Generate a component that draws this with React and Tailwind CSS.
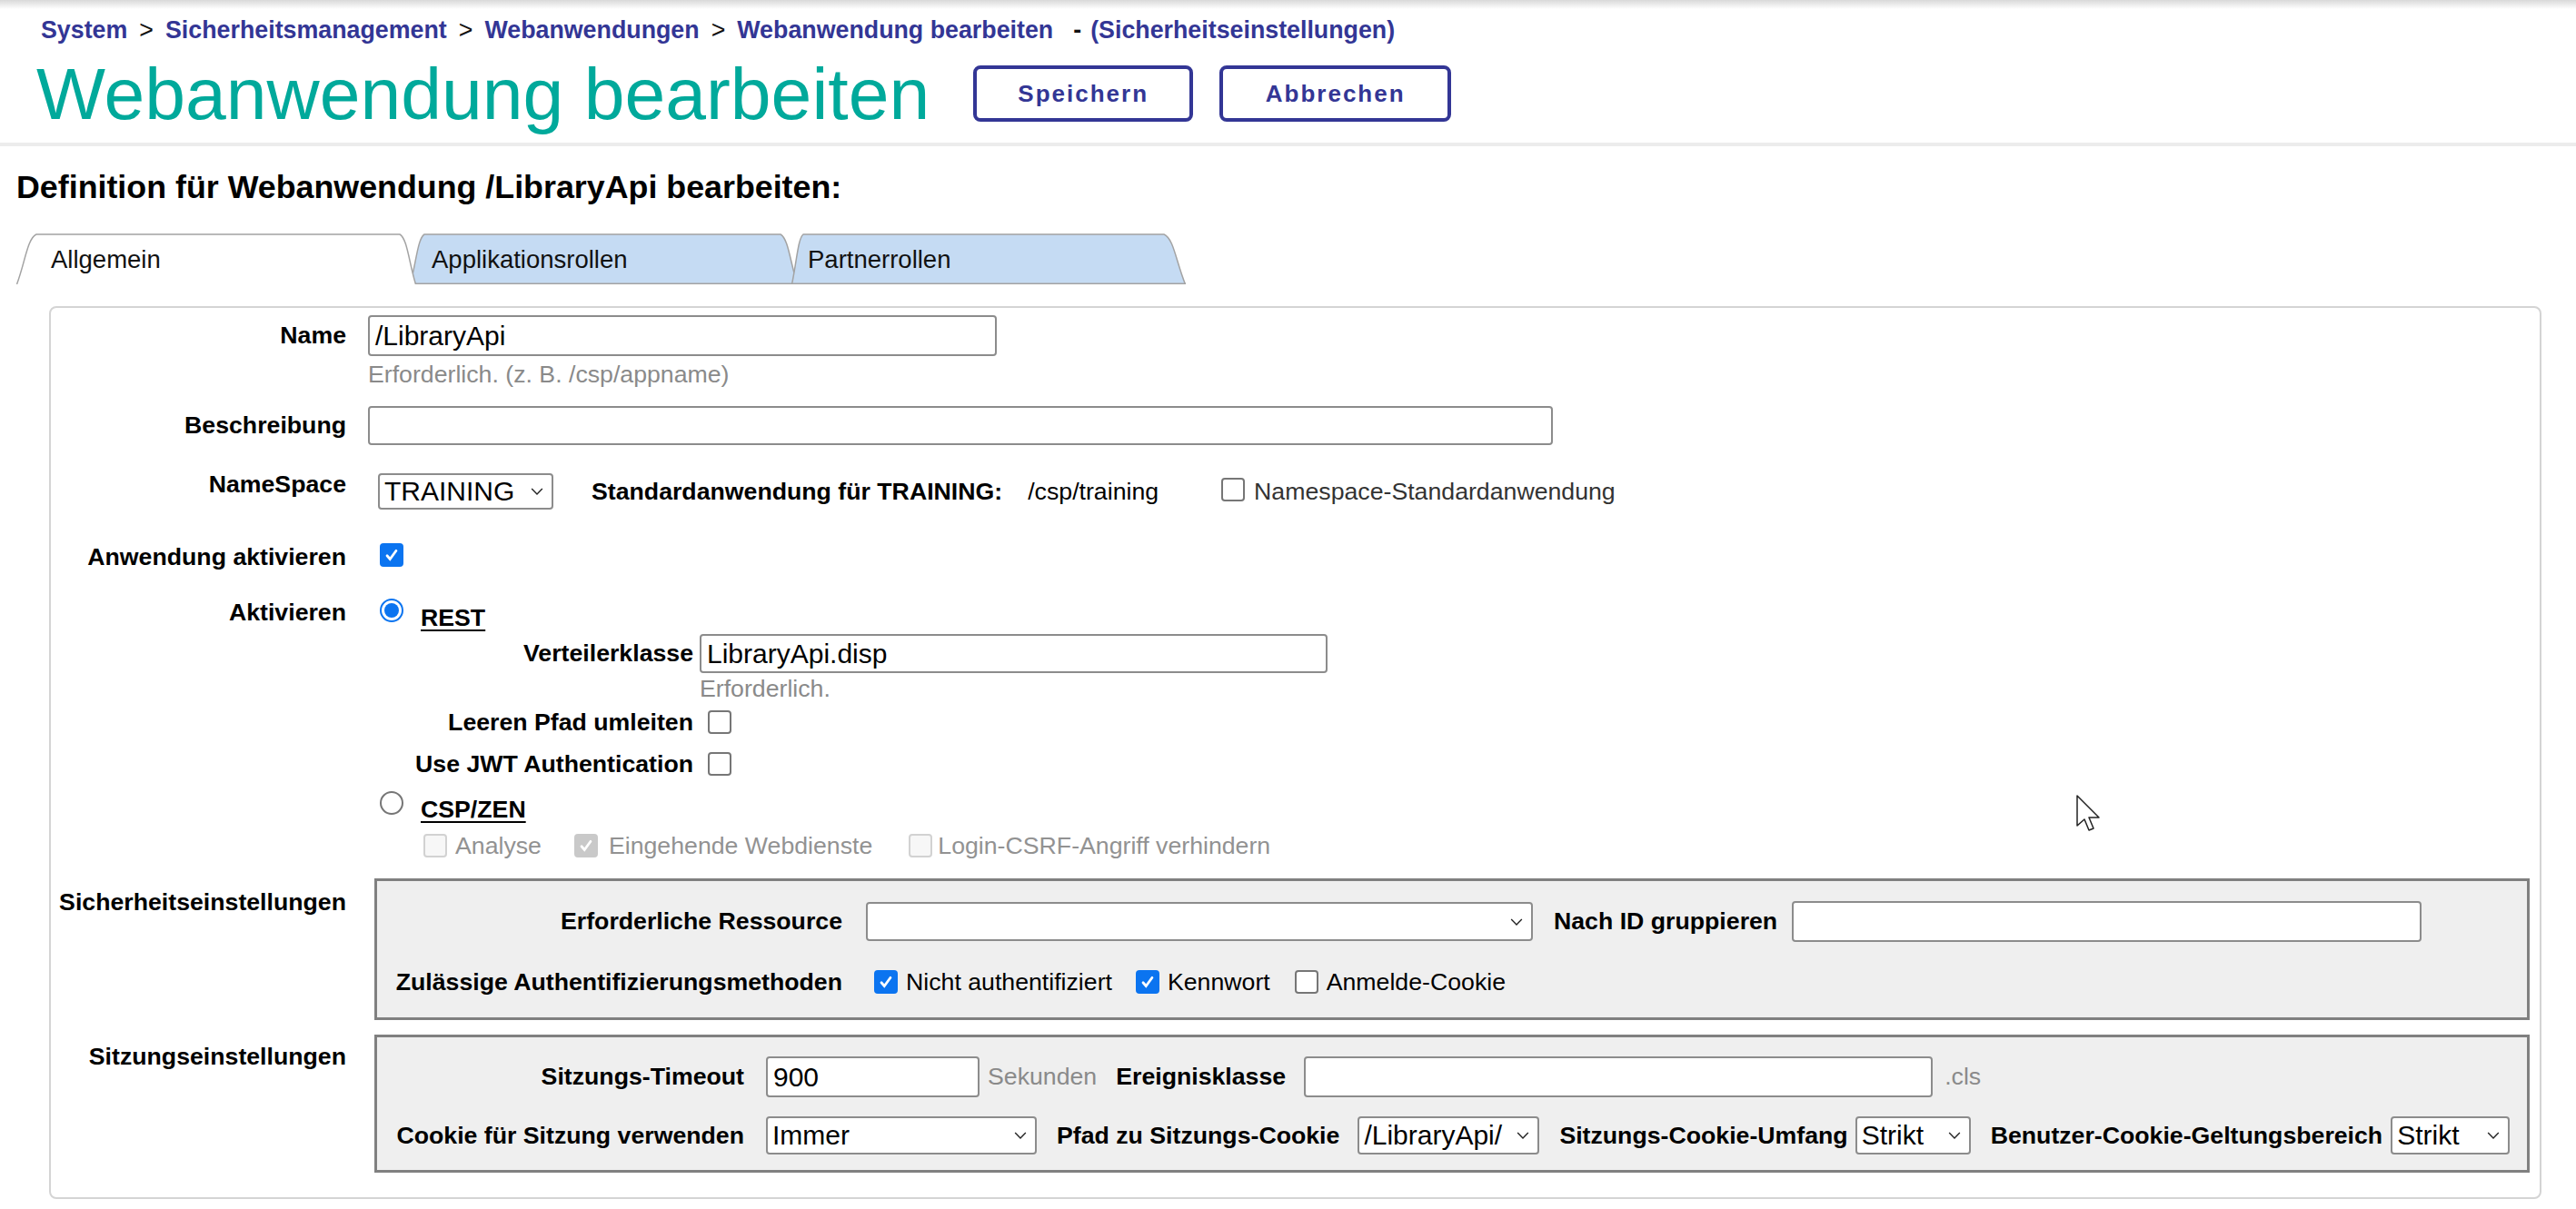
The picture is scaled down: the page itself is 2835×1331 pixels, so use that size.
import React from 'react';

const BLUE = 'text-[#333695]';

function Check({ checked, disabled, className = '' }) {
  if (checked) {
    return (
      <span
        className={`inline-flex h-[26px] w-[26px] shrink-0 items-center justify-center rounded-[4px] ${
          disabled ? 'bg-[#c9c9c9]' : 'bg-[#0b74f0]'
        } ${className}`}
      >
        <svg viewBox="0 0 16 16" className="h-[20px] w-[20px]">
          <path d="M4 8.6 L6.6 11.6 L12 4.2" fill="none" stroke="white" strokeWidth="2.2" strokeLinecap="round" />
        </svg>
      </span>
    );
  }
  return (
    <span
      className={`inline-block h-[26px] w-[26px] shrink-0 rounded-[4px] border-2 ${
        disabled ? 'border-[#d2d2d2] bg-[#f7f7f7]' : 'border-[#767676] bg-white'
      } ${className}`}
    />
  );
}

function Radio({ checked, className = '' }) {
  if (checked) {
    return (
      <span className={`flex h-[26px] w-[26px] shrink-0 items-center justify-center rounded-full border-[2px] border-[#0b74f0] bg-white ${className}`}>
        <span className="h-[16px] w-[16px] rounded-full bg-[#0b74f0]" />
      </span>
    );
  }
  return <span className={`block h-[26px] w-[26px] shrink-0 rounded-full border-2 border-[#767676] bg-white ${className}`} />;
}

function Input({ value = '', className = '' }) {
  return (
    <div className={`flex items-center rounded-[4px] border-2 border-[#8c8c8c] bg-white pl-[6px] text-[30px] leading-none text-black ${className}`}>
      {value}
    </div>
  );
}

function Select({ value = '', className = '' }) {
  return (
    <div className={`flex items-center justify-between rounded-[4px] border-2 border-[#8c8c8c] bg-white pl-[5px] pr-[9px] text-[30px] leading-none text-black ${className}`}>
      <span className="whitespace-nowrap">{value}</span>
      <svg viewBox="0 0 12 8" className="h-[10px] w-[14px] shrink-0">
        <path d="M1 1.5 L6 6.5 L11 1.5" fill="none" stroke="#222" strokeWidth="1.2" />
      </svg>
    </div>
  );
}

// label cell: right aligned, never wraps, overflows to the left if too long
function Label({ children, className = '' }) {
  return <div className={`flex shrink-0 justify-end whitespace-nowrap font-bold ${className}`}>{children}</div>;
}

function Tab({ label, active, width, left, right, textPad, className = '' }) {
  const h = 56;
  const fill = active ? '#ffffff' : '#c5dbf3';
  const d = `M0.5 ${h} C ${left * 0.45} ${h * 0.55}, ${left * 0.55} ${h * 0.1}, ${left} 1 L ${width - right} 1 C ${width - right * 0.55} ${h * 0.1}, ${width - right * 0.45} ${h * 0.55}, ${width - 0.5} ${h}`;
  return (
    <div className={`relative h-[56px] shrink-0 ${className}`} style={{ width }}>
      <svg className="absolute inset-0" width={width} height={h}>
        <path d={`${d} Z`} fill={fill} stroke="none" />
        <path d={d} fill="none" stroke="#a3a3a3" strokeWidth="1.5" />
        {!active && <line x1="0" y1={h - 0.75} x2={width} y2={h - 0.75} stroke="#a3a3a3" strokeWidth="1.5" />}
      </svg>
      <span className="relative block pt-[14px] text-[27.5px] leading-[30px] text-[#111]" style={{ paddingLeft: textPad }}>
        {label}
      </span>
    </div>
  );
}

export default function App() {
  return (
    <div className="relative min-h-[1331px] w-[2835px] bg-white font-['Liberation_Sans',Arial,sans-serif] text-[26.7px] text-black">
      {/* header */}
      <div className="border-b-[4px] border-[#ececec] pb-[14px]">
        <div className="h-[10px] bg-gradient-to-b from-[#d9d9d9] to-white" />
        <div className={`ml-[45px] mt-[8px] flex items-center gap-[13px] text-[26.8px] font-bold leading-[30px] ${BLUE}`}>
          <span>System</span>
          <span className="font-normal text-[#111]">&gt;</span>
          <span>Sicherheitsmanagement</span>
          <span className="font-normal text-[#111]">&gt;</span>
          <span>Webanwendungen</span>
          <span className="font-normal text-[#111]">&gt;</span>
          <span>Webanwendung bearbeiten</span>
          <span className="ml-[9px] text-[#111]">-</span>
          <span className="-ml-[3px]">(Sicherheitseinstellungen)</span>
        </div>
        <div className="ml-[40px] mt-[15px] flex items-center">
          <h1 className="text-[80.5px] leading-[80px] text-[#00a99b]">Webanwendung bearbeiten</h1>
          <button className={`ml-[48px] h-[62px] w-[242px] rounded-[8px] border-[4px] border-[#333695] text-[26px] font-bold tracking-[2px] ${BLUE}`}>
            Speichern
          </button>
          <button className={`ml-[29px] h-[62px] w-[255px] rounded-[8px] border-[4px] border-[#333695] text-[26px] font-bold tracking-[2px] ${BLUE}`}>
            Abbrechen
          </button>
        </div>
      </div>

      <h2 className="ml-[18px] mt-[25px] text-[35.8px] font-bold leading-[40px]">Definition für Webanwendung /LibraryApi bearbeiten:</h2>

      {/* tabs */}
      <div className="ml-[18px] mt-[31px] flex">
        <Tab label="Allgemein" active width={440} left={22} right={18} textPad={38} className="z-10" />
        <Tab label="Applikationsrollen" width={427} left={16} right={19} textPad={24} className="-ml-[7px]" />
        <Tab label="Partnerrollen" width={434} left={13} right={24} textPad={18} className="-ml-[7px]" />
      </div>

      {/* main panel */}
      <div className="ml-[54px] mt-[24px] w-[2743px] rounded-[8px] border-2 border-[#d4d4d4] pb-[27px] pt-[8px]">
        {/* Name */}
        <div className="flex">
          <Label className="w-[325px] leading-[45px]">Name</Label>
          <div className="ml-[24px]">
            <Input value="/LibraryApi" className="h-[45px] w-[692px]" />
            <div className="mt-[5px] leading-[30px] text-[#8a8a8a]">Erforderlich. (z. B. /csp/appname)</div>
          </div>
        </div>

        {/* Beschreibung */}
        <div className="mt-[20px] flex">
          <Label className="w-[325px] leading-[43px]">Beschreibung</Label>
          <Input className="ml-[24px] h-[43px] w-[1304px]" />
        </div>

        {/* NameSpace */}
        <div className="mt-[28px] flex items-start">
          <Label className="w-[325px] leading-[30px]">NameSpace</Label>
          <div className="ml-[24px] mt-[3px] flex h-[40px] items-center whitespace-nowrap">
            <Select value="TRAINING" className="ml-[11px] h-[40px] w-[193px]" />
            <span className="ml-[42px] font-bold">Standardanwendung für TRAINING:</span>
            <span className="ml-[28px]">/csp/training</span>
            <Check className="-mt-[4px] ml-[69px]" />
            <span className="ml-[10px] text-[#333]">Namespace-Standardanwendung</span>
          </div>
        </div>

        {/* Anwendung aktivieren */}
        <div className="mt-[37px] flex items-start">
          <Label className="w-[325px] leading-[30px]">Anwendung aktivieren</Label>
          <Check checked className="ml-[37px]" />
        </div>

        {/* Aktivieren */}
        <div className="mt-[31px] flex items-start">
          <Label className="w-[325px] leading-[30px]">Aktivieren</Label>
          <div className="ml-[24px]">
            <div className="flex items-start">
              <Radio checked className="ml-[13px]" />
              <span className="ml-[19px] mt-[6px] font-bold leading-[30px] underline underline-offset-[4px]">REST</span>
            </div>
            <div className="mt-[3px] flex">
              <Label className="w-[358px] leading-[43px]">Verteilerklasse</Label>
              <Input value="LibraryApi.disp" className="ml-[7px] h-[43px] w-[691px]" />
            </div>
            <div className="ml-[365px] mt-[2px] leading-[30px] text-[#8a8a8a]">Erforderlich.</div>
            <div className="mt-[7px] flex items-center">
              <Label className="w-[358px] leading-[30px]">Leeren Pfad umleiten</Label>
              <Check className="ml-[16px]" />
            </div>
            <div className="mt-[16px] flex items-center">
              <Label className="w-[358px] leading-[30px]">Use JWT Authentication</Label>
              <Check className="ml-[16px]" />
            </div>
            <div className="mt-[15px] flex items-start">
              <Radio className="ml-[13px]" />
              <span className="ml-[19px] mt-[5px] font-bold leading-[30px] underline underline-offset-[4px]">CSP/ZEN</span>
            </div>
            <div className="ml-[61px] mt-[10px] flex h-[30px] items-center whitespace-nowrap text-[#929292]">
              <Check disabled />
              <span className="ml-[9px]">Analyse</span>
              <Check disabled checked className="ml-[36px]" />
              <span className="ml-[12px]">Eingehende Webdienste</span>
              <Check disabled className="ml-[40px]" />
              <span className="ml-[6px]">Login-CSRF-Angriff verhindern</span>
            </div>
          </div>
        </div>

        {/* Sicherheitseinstellungen */}
        <div className="mt-[21px] flex items-start">
          <Label className="w-[325px] pt-[11px] leading-[30px]">Sicherheitseinstellungen</Label>
          <div className="ml-[31px] w-[2372px] border-[3px] border-[#808080] bg-[#efefef] pb-[24px] pl-[19px] pt-[23px]">
            <div className="flex h-[43px] items-center whitespace-nowrap">
              <Label className="w-[493px]">Erforderliche Ressource</Label>
              <Select className="ml-[26px] h-[43px] w-[734px]" />
              <span className="ml-[23px] font-bold">Nach ID gruppieren</span>
              <Input className="ml-[16px] h-[45px] w-[693px]" />
            </div>
            <div className="mt-[30px] flex h-[30px] items-center whitespace-nowrap">
              <Label className="w-[493px]">Zulässige Authentifizierungsmethoden</Label>
              <Check checked className="ml-[35px]" />
              <span className="ml-[9px]">Nicht authentifiziert</span>
              <Check checked className="ml-[26px]" />
              <span className="ml-[9px]">Kennwort</span>
              <Check className="ml-[27px]" />
              <span className="ml-[9px]">Anmelde-Cookie</span>
            </div>
          </div>
        </div>

        {/* Sitzungseinstellungen */}
        <div className="mt-[16px] flex items-start">
          <Label className="w-[325px] pt-[9px] leading-[30px]">Sitzungseinstellungen</Label>
          <div className="ml-[31px] w-[2372px] border-[3px] border-[#808080] bg-[#efefef] pb-[17px] pl-[19px] pt-[21px]">
            <div className="flex h-[45px] items-center whitespace-nowrap">
              <Label className="w-[385px]">Sitzungs-Timeout</Label>
              <Input value="900" className="ml-[24px] h-[45px] w-[235px]" />
              <span className="ml-[9px] text-[#8a8a8a]">Sekunden</span>
              <span className="ml-[21px] font-bold">Ereignisklasse</span>
              <Input className="ml-[20px] h-[45px] w-[692px]" />
              <span className="ml-[13px] text-[#8a8a8a]">.cls</span>
            </div>
            <div className="mt-[21px] flex h-[42px] items-center whitespace-nowrap">
              <Label className="w-[385px]">Cookie für Sitzung verwenden</Label>
              <Select value="Immer" className="ml-[24px] h-[42px] w-[298px]" />
              <span className="ml-[22px] font-bold">Pfad zu Sitzungs-Cookie</span>
              <Select value="/LibraryApi/" className="ml-[20px] h-[42px] w-[200px]" />
              <span className="ml-[22px] font-bold">Sitzungs-Cookie-Umfang</span>
              <Select value="Strikt" className="ml-[8px] h-[42px] w-[127px]" />
              <span className="ml-[22px] font-bold">Benutzer-Cookie-Geltungsbereich</span>
              <Select value="Strikt" className="ml-[9px] h-[42px] w-[131px]" />
            </div>
          </div>
        </div>
      </div>

      {/* mouse pointer */}
      <svg className="absolute left-[2285px] top-[875px]" width="28" height="42" viewBox="0 0 28 42">
        <path d="M1 1 L1 34 L9 27 L14 39 L19 37 L14 25 L25 25 Z" fill="white" stroke="#222" strokeWidth="1.5" strokeLinejoin="round" />
      </svg>
    </div>
  );
}
